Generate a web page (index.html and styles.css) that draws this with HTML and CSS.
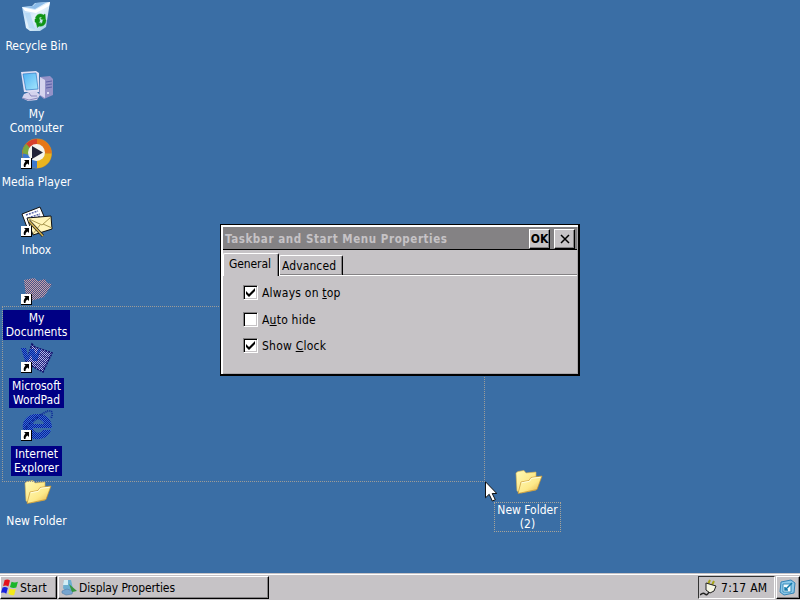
FILE: index.html
```html
<!DOCTYPE html>
<html lang="en">
<head>
<meta charset="utf-8">
<title>Desktop</title>
<link rel="stylesheet" href="styles.css">
</head>
<body>
<svg class="defs" width="0" height="0">
  <defs>
    <linearGradient id="gold" x1="0" y1="0" x2="1" y2="1"><stop offset="0" stop-color="#fffbb8"/><stop offset=".55" stop-color="#fde98a"/><stop offset="1" stop-color="#e3a93c"/></linearGradient>
    <linearGradient id="glass" x1="0" y1="0" x2="1" y2="1"><stop offset="0" stop-color="#a5cff5"/><stop offset=".5" stop-color="#e4f1fb"/><stop offset="1" stop-color="#9ccbe6"/></linearGradient>
    <linearGradient id="screen" x1="0" y1="0" x2="1" y2="1"><stop offset="0" stop-color="#4fb2f4"/><stop offset="1" stop-color="#a5e6fc"/></linearGradient>
    <pattern id="pinkcheck" width="2" height="2" patternUnits="userSpaceOnUse"><rect width="2" height="2" fill="#c5a5a9"/><rect width="1" height="1" fill="#49508a"/><rect x="1" y="1" width="1" height="1" fill="#49508a"/></pattern>
    <pattern id="lilaccheck" width="2" height="2" patternUnits="userSpaceOnUse"><rect width="2" height="2" fill="#b4b8ea"/><rect width="1" height="1" fill="#20207c"/><rect x="1" y="1" width="1" height="1" fill="#20207c"/></pattern>
    <pattern id="bluecheck" width="2" height="2" patternUnits="userSpaceOnUse"><rect width="2" height="2" fill="#336cd6"/><rect width="1" height="1" fill="#0b1e96"/><rect x="1" y="1" width="1" height="1" fill="#0b1e96"/></pattern>
    <symbol id="shortcut" viewBox="0 0 11 11"><path d="M0 0h11v11H0z" fill="#000"/><path d="M0 0h10v10H0z" fill="#fff"/><path d="M3 2h5v5L6.500 5.500C5 6.500 4.500 7.500 4.500 9H3C2.200 6.500 3 5 4.500 3.500z" fill="#000"/></symbol>
    <symbol id="folder" viewBox="0 0 32 32"><path d="M4 6l2-1.500 6-1 2 2.500 10-1v18L9 26l-4-2z" fill="url(#gold)" stroke="#dcb653" stroke-width=".6"/><path d="M6 26.500l3-11.500 8-1.500 2-3 11-1.500-5 13.500z" fill="url(#gold)" stroke="#c49232" stroke-width=".7"/><path d="M9.500 15.800l8-1.500 2-3 9-1" fill="none" stroke="#fffddd"/></symbol>
  </defs>
</svg>
<main class="desktop">
  <div class="marquee"></div>
  <div class="icons">
    <div class="item">
      <svg class="pic" viewBox="0 0 32 32"><path d="M1 5l10-1 3-3 15-1-4 25-6 4H9l-4-3z" fill="url(#glass)"/><path d="M1 5l13 3 15-8-1 4-13 7-11-2z" fill="#fff"/><path d="M5 5l7-1 3-3 11-1-12 7z" fill="#8bbbe8"/><path d="M4 11l4 15 6 1-5-16z" fill="#aed4f3" opacity=".7"/><path d="M14.500 16c1-4 5-5 8-3l1.500-1 .5 6-5-1 1.500-1.500c-2-1-3 0-3.500 2zM25 18c0 4-3 7-7 6l-1.500 1.500L15 20l5 1-1.500 1c2 .5 3-1 3.500-4zM14 17l4-1 1 3-2 2-3-1z" fill="#109414" stroke="#109414" stroke-width=".5"/></svg>
      <span class="label">Recycle Bin</span>
    </div>
    <div class="item">
      <svg class="pic" viewBox="0 0 32 32"><path d="M19 7l10-1 3 3v16l-9 4-5-4z" fill="#9391c7"/><path d="M19 7l5 3v18l-5-3z" fill="#d5d4ee"/><path d="M25 12l6-1M25 15l6-1M25 18l6-1" stroke="#5e60a8"/><path d="M26 22h2v2h-2z" fill="#dcdcf5"/><path d="M0 2l15-1 3 2v19L3 22z" fill="#dedff5"/><path d="M2 4l13-1 2 16L5 20z" fill="url(#screen)" stroke="#317cc4" stroke-width=".7"/><path d="M8 22l7-1 4 4-3 5-9 1-6-3 2-4z" fill="#d4d3ed"/><path d="M1 28l7 2 9-2M8 23l2 3h6" fill="none" stroke="#8a89bd"/></svg>
      <span class="label">My<br>Computer</span>
    </div>
    <div class="item">
      <svg class="pic" viewBox="0 0 32 32"><circle cx="16" cy="15.500" r="15" fill="#b98c3a"/><path d="M16 1A14.500 14.500 0 0 1 30.500 15.500H16z" fill="#e67718"/><path d="M30.500 15.500A14.500 14.500 0 0 1 16 30V15.500z" fill="#eab41f"/><path d="M1.500 15.500A14.500 14.500 0 0 1 16 1v14.500z" fill="#d7402c"/><path d="M16 30A14.500 14.500 0 0 1 1.500 15.500H16z" fill="#3d78ce"/><path d="M1.500 15q0-6 4-9l5 6-3 5z" fill="#79a940"/><circle cx="15.500" cy="14.500" r="8.500" fill="#f4f4ed"/><path d="M11 8l11 6.500L11 21z" fill="#222438"/><use href="#shortcut" x="0" y="20" width="11" height="11"/></svg>
      <span class="label">Media Player</span>
    </div>
    <div class="item">
      <svg class="pic" viewBox="0 0 32 32"><path d="M1 8l18-7 6 14-18 9z" fill="#fff" stroke="#111"/><path d="M5 9l12-4M7 12l12-4M9 15l10-5" stroke="#5260a8" stroke-width="1.500" stroke-dasharray="2 1"/><path d="M6 12l24-2 1 13-19 6z" fill="#fff4ba" stroke="#111"/><path d="M8 13l13 6 9-8M12 28l7-9M31 22l-9-4" fill="none" stroke="#a8964f"/><path d="M8 15l14 15" stroke="#222" stroke-width="3"/><path d="M8 15l14 15" stroke="#d5b44f" stroke-width="1.500"/><use href="#shortcut" x="0" y="20" width="11" height="11"/></svg>
      <span class="label">Inbox</span>
    </div>
    <div class="item selected">
      <svg class="pic" viewBox="0 0 32 32"><path d="M3 6l10-2 4 3 7-2 2 4 5 1-8 13-13 4-5-4z" fill="url(#pinkcheck)"/><use href="#shortcut" x="0" y="20" width="11" height="11"/></svg>
      <span class="label">My<br>Documents</span>
    </div>
    <div class="item selected">
      <svg class="pic" viewBox="0 0 32 32"><path d="M11 2l3 3 17 6-9 19-17-9z" fill="url(#lilaccheck)" stroke="#10106b" stroke-width="1.500" stroke-dasharray="2 1"/><path d="M0 6h5l2 8 2-7h4l2 6 2-6h3l-4 12h-4l-2-6-3 6H4z" fill="url(#bluecheck)"/><path d="M17 12l10 4M16 17l10 4M15 22l9 4" stroke="#202477" stroke-dasharray="1 1"/><use href="#shortcut" x="0" y="20" width="11" height="11"/></svg>
      <span class="label">Microsoft<br>WordPad</span>
    </div>
    <div class="item selected">
      <svg class="pic" viewBox="0 0 32 32"><path d="M2 19C0 10 8 3 17 4c9 0 14 6 14 14H12c1 6 8 6 10 2h8c-2 7-9 10-16 9C7 29 3 25 2 19zm10-5h11c-1-6-10-6-11 0z" fill="url(#bluecheck)" fill-rule="evenodd"/><path d="M3 26C-2 21 18 4 27 1c5-1 5 3 3 7" fill="none" stroke="#0c2797" stroke-width="2" stroke-dasharray="1 1"/><use href="#shortcut" x="0" y="20" width="11" height="11"/></svg>
      <span class="label">Internet<br>Explorer</span>
    </div>
    <div class="item raised">
      <svg class="pic"><use href="#folder"/></svg>
      <span class="label">New Folder</span>
    </div>
  </div>
  <div class="item dropped">
    <svg class="pic"><use href="#folder"/></svg>
    <span class="label focus">New Folder<br>(2)</span>
  </div>
  <svg class="cursor" viewBox="0 0 12 21"><path d="M.5.8v16l3.700-3.500L7.300 20l3-1.300-3.100-6.200h4.600z" fill="#fff" stroke="#111"/></svg>

  <section class="window">
    <header class="titlebar">
      <h1>Taskbar and Start Menu Properties</h1>
      <button class="cap ok">OK</button>
      <button class="cap"><svg width="10" height="10" viewBox="0 0 10 10"><path d="M1 1l8 8M9 1L1 9" stroke="#000" stroke-width="1.500"/></svg></button>
    </header>
    <nav class="tabs"><span class="tab active">General</span><span class="tab">Advanced</span></nav>
    <div class="options">
      <div class="option"><i class="box"><svg viewBox="0 0 9 9"><path d="M0 3v3l3 3 6-6V0L3 6z"/></svg></i><span>Always on <u>t</u>op</span></div>
      <div class="option"><i class="box"></i><span>A<u>u</u>to hide</span></div>
      <div class="option"><i class="box"><svg viewBox="0 0 9 9"><path d="M0 3v3l3 3 6-6V0L3 6z"/></svg></i><span>Show <u>C</u>lock</span></div>
    </div>
  </section>
</main>
<footer class="taskbar">
  <button class="task start"><svg width="19" height="18" viewBox="0 0 17 17"><path d="M3 1q3-1.500 5 .500L6.500 7Q4 5.500 1.500 6.500z" fill="#e3121c"/><path d="M9.500 2.500q3 1.500 6 0L14 8q-3 1-6-.500z" fill="#1ab52b"/><path d="M1 8q2.500-1 5 .500L4.500 14q-2-2-5-1z" fill="#1720df"/><path d="M7.500 9q3 1.500 6 .500L12 15q-3 1-5.500-1z" fill="#f3ea19"/></svg><span>Start</span></button>
  <button class="task app"><svg width="17" height="17" viewBox="0 0 17 17"><path d="M3 1h7l2 9-3 2H4L2 9z" fill="#6baed0"/><path d="M3 1h4v5H2z" fill="#d1eef5"/><path d="M1 12l5-2 6 2-1 3-6 1-4-2z" fill="#76a5d0" stroke="#547da7" stroke-width=".6"/><path d="M8 5l8 7-5 1z" fill="#35963e"/></svg><span>Display Properties</span></button>
  <div class="tray"><svg width="18" height="18" viewBox="0 0 18 18"><path d="M8 5l2-4M12 6l2-4" stroke="#a7a317" stroke-width="2"/><path d="M6 4l10 3-2 5-4 2-4-3z" fill="#f5f5e5" stroke="#222"/><path d="M9 13q-2 4-4 2-2-2-5 1" fill="none" stroke="#222" stroke-width="1.500"/></svg><span>7:17 AM</span></div>
  <button class="task show"><svg width="17" height="17" viewBox="0 0 17 17"><path d="M2 3l10-2 4 3-1 10-10 2-4-3z" fill="#8bc8e9" stroke="#3384b8"/><path d="M4 5h8v8H4z" fill="#f5fcff" stroke="#3389b9"/><path d="M6 11l7-7M6 8v3h3" fill="none" stroke="#147aaa" stroke-width="1.500"/></svg></button>
</footer>
</body>
</html>
```
FILE: styles.css
```css
* { box-sizing: border-box; }
body {
  margin: 0; width: 800px; height: 600px; overflow: hidden;
  display: flex; flex-direction: column;
  background: #3a6ea5; color: #000;
  font: 12px/14px "DejaVu Sans Condensed", "DejaVu Sans", sans-serif;
  font-stretch: condensed; letter-spacing: -.1px;
}
button { font: inherit; letter-spacing: inherit; color: inherit; margin: 0; border-radius: 0; }
.defs { position: absolute; }
.desktop { position: relative; height: 573px; }
.icons { display: flex; flex-direction: column; width: 73px; }
.item { width: 73px; height: 68px; padding-top: 2px; display: flex; flex-direction: column; align-items: center; color: #fff; text-align: center; letter-spacing: 0; }
.pic { width: 32px; height: 32px; flex: none; }
.label { margin-top: 3px; padding: 1px; border: 1px solid transparent; white-space: nowrap; }
.selected .label { background: #000084; padding: 0 2px; margin-top: 4px; height: 30px; }
.raised { padding-top: 1px; }
.dropped { position: absolute; left: 491px; top: 465px; }
.focus { border: 1px dotted #a9a498; padding: 0 2px; margin-top: 3px; }
.marquee { position: absolute; left: 2px; top: 306px; width: 483px; height: 176px; border: 1px dotted #9c9c98; }
.cursor { position: absolute; left: 485px; top: 481px; width: 12px; height: 21px; }
.window { position: absolute; left: 220px; top: 224px; width: 360px; height: 152px; background: #c6c3c6; border: 1px solid #000; border-right-width: 2px; border-bottom-width: 2px; box-shadow: inset 2px 2px #fff, inset -1px -1px #aaa7aa; padding: 2px 1px 1px 2px; }
.titlebar { height: 23px; display: flex; align-items: flex-start; background: #848284; border-bottom: 1px solid #000; padding-right: 2px; color: #c6c3c6; }
.titlebar h1 { flex: 1; margin: 5px 0 0 2px; font-size: 11.500px; line-height: 14px; font-weight: bold; white-space: nowrap; letter-spacing: .57px; }
.cap { width: 21px; height: 20px; margin: 2px 0 0 4px; padding: 0; background: #c6c3c6; border: 1px solid #fff; border-right-color: #000; border-bottom-color: #000; box-shadow: inset -1px -1px #848284; display: flex; align-items: center; justify-content: center; color: #000; font-weight: bold; }
.tabs { height: 26px; padding-top: 3px; display: flex; align-items: flex-end; border-bottom: 1px solid #fff; box-shadow: 0 -1px #848284 inset; }
.tab { height: 20px; padding: 3px 2px 0; width: 64px; border-top: 1px solid #fff; border-left: 1px solid #fff; border-right: 1px solid #000; box-shadow: inset -1px 0 #848284; border-radius: 2px 2px 0 0; white-space: nowrap; letter-spacing: .1px; }
.tab.active { height: 23px; width: 56px; padding-left: 5px; margin: 0 0 -1px; background: #c6c3c6; letter-spacing: -.1px; }
.options { padding: 9px 0 0 20px; display: grid; grid-template-rows: 27px 26px 26px; letter-spacing: .22px; }
.option { display: flex; align-items: flex-start; gap: 4px; }
.option span { padding-top: 1px; }
.box { width: 15px; height: 15px; background: #fff; border: 1px solid; border-color: #848284 #fff #fff #848284; box-shadow: inset 1px 1px #000, inset -1px -1px #c6c3c6; display: flex; align-items: center; justify-content: center; }
.box svg { width: 9px; height: 9px; }
.taskbar { height: 27px; display: flex; align-items: flex-start; padding-top: 2px; background: #c6c3c6; border-top: 1px solid #c6c3c6; box-shadow: inset 0 1px #fff; }
.task { height: 23px; padding: 0 0 0 2px; background: #c6c3c6; border: 1px solid #fff; border-right-color: #000; border-bottom-color: #000; box-shadow: inset -1px -1px #848284; display: flex; align-items: center; }
.start { width: 57px; padding-left: 0; letter-spacing: .1px; }
.app { width: 211px; margin-left: 1px; }
.task span { padding: 0 0 0 1px; white-space: nowrap; }
.start span { padding-left: 0; }
.tray { margin-left: auto; width: 77px; height: 23px; border: 1px solid; border-color: #333 #fff #fff #333; display: flex; align-items: center; gap: 3px; white-space: nowrap; padding-left: 1px; letter-spacing: .3px; }
.show { width: 24px; margin-left: 1px; }
```
